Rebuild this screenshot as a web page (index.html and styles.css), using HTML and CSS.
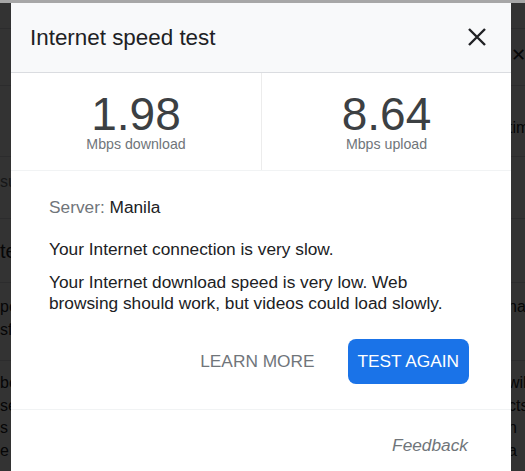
FILE: index.html
```html
<!DOCTYPE html>
<html lang="en">
<head>
<meta charset="utf-8">
<title>Internet speed test</title>
<link rel="stylesheet" href="styles.css">
</head>
<body>
<div class="page">
  <div class="bg-row r1"></div>
  <div class="bg-row r2"><span class="bl"></span><span class="br glyph">&#x2715;</span></div>
  <div class="bg-row r3"><span class="bl"></span><span class="br">time</span></div>
  <div class="bg-row r4"><span class="bl muted">suggested</span><span class="br"></span></div>
  <div class="bg-row r5"><span class="bl big">test</span><span class="br"></span></div>
  <div class="bg-row r6">
    <div class="bg-line"><span class="bl">people</span><span class="br">na</span></div>
    <div class="bg-line"><span class="bl">sf</span><span class="br"></span></div>
  </div>
  <div class="bg-block">
    <div class="bg-line"><span class="bl">be</span><span class="br">will</span></div>
    <div class="bg-line"><span class="bl">se</span><span class="br">cts</span></div>
    <div class="bg-line"><span class="bl">s</span><span class="br">n</span></div>
    <div class="bg-line"><span class="bl">e</span><span class="br">a</span></div>
  </div>
</div>
<div class="scrim"></div>
<div class="topline"></div>

<div class="dialog" role="dialog" aria-label="Internet speed test">
  <header class="dlg-header">
    <h1 class="dlg-title">Internet speed test</h1>
    <button class="close-btn" aria-label="Close">
      <svg width="18" height="18" viewBox="0 0 18 18"><path d="M1 1 L17 17 M17 1 L1 17" stroke="#202124" stroke-width="2.4" fill="none"/></svg>
    </button>
  </header>

  <section class="stats">
    <div class="stat">
      <div class="stat-num">1.98</div>
      <div class="stat-label">Mbps download</div>
    </div>
    <div class="stat">
      <div class="stat-num">8.64</div>
      <div class="stat-label">Mbps upload</div>
    </div>
  </section>

  <section class="dlg-body">
    <p class="server"><span class="muted-label">Server:</span> Manila</p>
    <p class="msg">Your Internet connection is very slow.</p>
    <p class="msg">Your Internet download speed is very low. Web browsing should work, but videos could load slowly.</p>
    <div class="actions">
      <button class="btn btn-text">LEARN MORE</button>
      <button class="btn btn-primary">TEST AGAIN</button>
    </div>
  </section>

  <footer class="dlg-footer">
    <span class="feedback">Feedback</span>
  </footer>
</div>
</body>
</html>
```

FILE: styles.css
```css
html, body {
  margin: 0;
  padding: 0;
  height: 100%;
  overflow: hidden;
}
body {
  font-family: "Liberation Sans", Arial, sans-serif;
  background: #fff;
  color: #202124;
  position: relative;
}

/* background page */
.page {
  font-size: 16px;
  color: #202124;
}
.bg-row {
  border-bottom: 1px solid #dadce0;
  box-sizing: border-box;
}
.bg-row, .bg-line {
  display: flex;
  white-space: nowrap;
}
.bl {
  flex: 0 0 508px;
  overflow: hidden;
}
.br {
  flex: 1;
  overflow: hidden;
}
.r1 { height: 29px; }
.r2 { height: 57px; padding-top: 16px; line-height: 20px; }
.r3 { height: 71px; padding-top: 32px; line-height: 20px; }
.r4 { height: 62px; padding-top: 15px; line-height: 20px; }
.r5 { height: 64px; padding-top: 20px; line-height: 24px; }
.r6 { height: 78px; padding-top: 12px; display: block; }
.r6 .bg-line { line-height: 23px; }
.bg-block { padding-top: 11px; }
.bg-block .bg-line { line-height: 22.7px; }
.muted { color: #70757a; }
.big { font-size: 20px; }
.glyph { font-size: 18px; padding-left: 3px; }

.scrim {
  position: absolute;
  inset: 0;
  background: rgba(0, 0, 0, 0.8);
}
.topline {
  position: absolute;
  top: 0;
  left: 0;
  right: 0;
  height: 3px;
  background: #a7a7a7;
  z-index: 3;
}

/* dialog */
.dialog {
  position: absolute;
  top: 3px;
  left: 11px;
  width: 500px;
  height: 520px;
  background: #fff;
  z-index: 2;
}
.dlg-header {
  height: 69px;
  background: #f8f9fa;
  border-bottom: 1px solid #dadce0;
  display: flex;
  align-items: center;
  justify-content: space-between;
  padding: 0 25px 0 19px;
}
.dlg-title {
  margin: 0;
  font-size: 22.4px;
  font-weight: normal;
  color: #202124;
}
.close-btn {
  border: 0;
  background: none;
  padding: 0;
  width: 18px;
  height: 18px;
  margin-top: -1px;
  display: flex;
  cursor: pointer;
}

.stats {
  display: grid;
  grid-template-columns: 251px 1fr;
  border-bottom: 1px solid #f1f3f4;
}
.stat {
  text-align: center;
  padding: 19px 0 18px;
}
.stat:first-child {
  border-right: 1px solid #ececec;
}
.stat-num {
  font-size: 46px;
  line-height: 44px;
  color: #3c4043;
}
.stat-label {
  font-size: 14.2px;
  line-height: 16px;
  color: #70757a;
}

.dlg-body {
  padding: 26px 38px 0;
  font-size: 17.3px;
  line-height: 21px;
}
.dlg-body p {
  margin: 0;
}
.server {
  margin-bottom: 21px !important;
}
.muted-label {
  color: #70757a;
}
.msg + .msg {
  margin-top: 12px;
}
.msg:first-of-type {
  margin-bottom: 0;
}
.actions {
  display: flex;
  justify-content: flex-end;
  align-items: center;
  gap: 23px;
  margin: 25px 4px 25px 0;
}
.btn {
  font-family: "Liberation Sans", Arial, sans-serif;
  font-size: 17.3px;
  height: 45px;
  padding: 0 10px;
  border: 0;
  border-radius: 8px;
  background: none;
  cursor: pointer;
}
.btn-text {
  color: #70757a;
}
.btn-primary {
  background: #1a73e8;
  color: #fff;
}

.dlg-footer {
  border-top: 1px solid #f1f3f4;
  padding: 25px 43px 0 0;
  text-align: right;
  font-size: 17.3px;
  line-height: 21px;
}
.feedback {
  font-style: italic;
  color: #70757a;
}
```
